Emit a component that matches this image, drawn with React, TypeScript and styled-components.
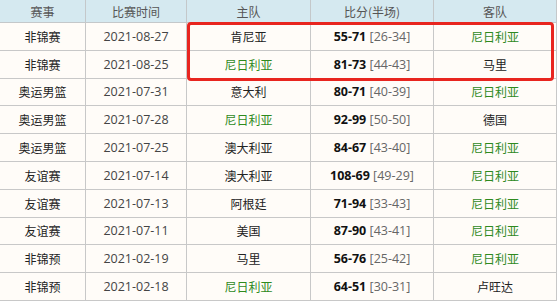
import styled, {createGlobalStyle} from "styled-components";

type Match = {
    league: string,
    date: string,
    home: string,
    score: string,
    half: string,
    away: string
}

const TEAM = "尼日利亚";

const matches: Match[] = [
    {league: "非锦赛", date: "2021-08-27", home: "肯尼亚", score: "55-71", half: "26-34", away: "尼日利亚"},
    {league: "非锦赛", date: "2021-08-25", home: "尼日利亚", score: "81-73", half: "44-43", away: "马里"},
    {league: "奥运男篮", date: "2021-07-31", home: "意大利", score: "80-71", half: "40-39", away: "尼日利亚"},
    {league: "奥运男篮", date: "2021-07-28", home: "尼日利亚", score: "92-99", half: "50-50", away: "德国"},
    {league: "奥运男篮", date: "2021-07-25", home: "澳大利亚", score: "84-67", half: "43-40", away: "尼日利亚"},
    {league: "友谊赛", date: "2021-07-14", home: "澳大利亚", score: "108-69", half: "49-29", away: "尼日利亚"},
    {league: "友谊赛", date: "2021-07-13", home: "阿根廷", score: "71-94", half: "33-43", away: "尼日利亚"},
    {league: "友谊赛", date: "2021-07-11", home: "美国", score: "87-90", half: "43-41", away: "尼日利亚"},
    {league: "非锦预", date: "2021-02-19", home: "马里", score: "56-76", half: "25-42", away: "尼日利亚"},
    {league: "非锦预", date: "2021-02-18", home: "尼日利亚", score: "64-51", half: "30-31", away: "卢旺达"},
];

export default function App() {
    return <>
        <GlobalStyle/>
        <Wrap>
            <StyledTable>
                <colgroup>
                    <col style={{width: 86}}/>
                    <col style={{width: 101}}/>
                    <col style={{width: 124}}/>
                    <col style={{width: 123}}/>
                    <col style={{width: 123}}/>
                </colgroup>
                <thead>
                <tr>
                    <HeadCell>赛事</HeadCell>
                    <HeadCell>比赛时间</HeadCell>
                    <HeadCell>主队</HeadCell>
                    <HeadCell>比分(半场)</HeadCell>
                    <HeadCell>客队</HeadCell>
                </tr>
                </thead>
                <tbody>
                {matches.map(m => (
                    <Row key={m.date}>
                        <Cell>{m.league}</Cell>
                        <NumCell>{m.date}</NumCell>
                        <Cell $highlight={m.home === TEAM}>{m.home}</Cell>
                        <NumCell>
                            <Score>{m.score}</Score> <Half>[{m.half}]</Half>
                        </NumCell>
                        <Cell $highlight={m.away === TEAM}>{m.away}</Cell>
                    </Row>
                ))}
                </tbody>
            </StyledTable>
            <RecentBox/>
        </Wrap>
    </>
}

const GlobalStyle = createGlobalStyle`
  html, body {
    margin: 0;
    padding: 0;
    background: #ffffff;
  }

  body {
    font-family: "Open Sans", "Noto Sans CJK SC", sans-serif;
    color: #333333;
  }
`

const Wrap = styled.div`
  position: relative;
  width: 559px;
  height: 304px;
  overflow: hidden;
  background: #ffffff;
`

const StyledTable = styled.table`
  border-collapse: collapse;
  table-layout: fixed;
  width: 558px;
  margin-left: -1px;
  margin-top: -1px;
  background: #fffcf8;
`

const HeadCell = styled.th`
  height: 22px;
  padding: 0;
  background: #d5e9f0;
  border: 1px solid #c4c8ca;
  font-family: "Noto Sans CJK SC", sans-serif;
  font-size: 12px;
  font-weight: 400;
  color: #555555;
  text-align: center;
  vertical-align: middle;
`

const Row = styled.tr`
  height: 27.8px;
`

const Cell = styled.td<{ $highlight?: boolean }>`
  padding: 0;
  border: 1px solid #c8c8c8;
  font-family: "Noto Sans CJK SC", sans-serif;
  font-size: 12px;
  color: ${p => p.$highlight ? "#2f8a1e" : "#222222"};
  text-align: center;
  vertical-align: middle;
`

const NumCell = styled.td`
  padding: 0;
  border: 1px solid #c8c8c8;
  font-family: "Open Sans", "Noto Sans CJK SC", sans-serif;
  font-size: 12.5px;
  color: #444444;
  text-align: center;
  vertical-align: middle;
`

const Score = styled.b`
  font-weight: 700;
  color: #111111;
`

const Half = styled.span`
  color: #666666;
`

const RecentBox = styled.div`
  position: absolute;
  left: 187px;
  top: 22px;
  width: 367px;
  height: 59px;
  box-sizing: border-box;
  border: 3px solid #e8251f;
  border-radius: 4px;
  pointer-events: none;
`
